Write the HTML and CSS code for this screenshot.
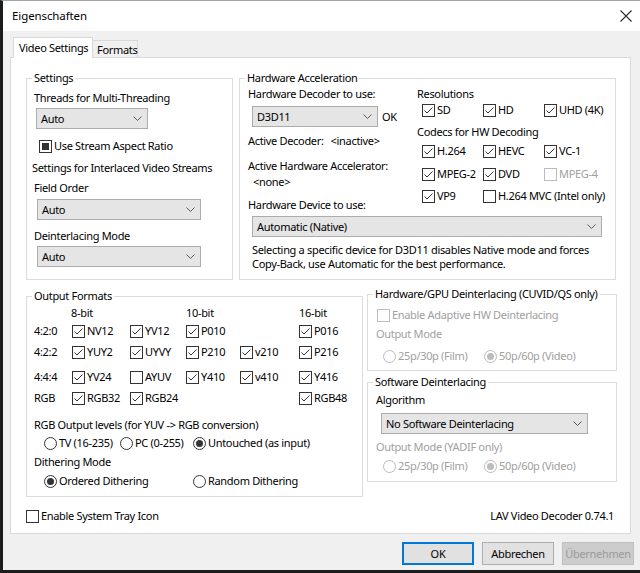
FILE: index.html
```html
<!DOCTYPE html>
<html>
<head>
<meta charset="utf-8">
<title>Eigenschaften</title>
<link rel="stylesheet" href="styles.css">
</head>
<body>
<div class="window">
  <div class="titlebar">
    <span class="title">Eigenschaften</span>
    <svg class="close" width="12" height="12" viewBox="0 0 12 12"><path d="M0.5 0.5L11.5 11.5M11.5 0.5L0.5 11.5" stroke="#2b2b2b" stroke-width="1.1" fill="none"/></svg>
  </div>
  <div class="dialog">
    <div class="tabs">
      <div class="tab tab-active">Video Settings</div>
      <div class="tab tab-formats">Formats</div>
    </div>
    <div class="page">
      <div class="row1">
        <fieldset class="group g-settings">
          <legend>Settings</legend>
          <div class="lbl l-threads">Threads for Multi-Threading</div>
          <div class="select s-threads"><span>Auto</span><svg class="chev" width="9" height="5" viewBox="0 0 9 5"><path d="M0.5 0.5L4.5 4.5L8.5 0.5" stroke="#5a5a5a" fill="none"/></svg></div>
          <div class="cb cb-aspect"><span class="box"><span class="indet"></span></span><span class="cbt">Use Stream Aspect Ratio</span></div>
          <div class="lbl l-interlaced">Settings for Interlaced Video Streams</div>
          <div class="lbl l-field">Field Order</div>
          <div class="select s-field"><span>Auto</span><svg class="chev" width="9" height="5" viewBox="0 0 9 5"><path d="M0.5 0.5L4.5 4.5L8.5 0.5" stroke="#5a5a5a" fill="none"/></svg></div>
          <div class="lbl l-deint">Deinterlacing Mode</div>
          <div class="select s-deint"><span>Auto</span><svg class="chev" width="9" height="5" viewBox="0 0 9 5"><path d="M0.5 0.5L4.5 4.5L8.5 0.5" stroke="#5a5a5a" fill="none"/></svg></div>
        </fieldset>
        <fieldset class="group g-hw">
          <legend>Hardware Acceleration</legend>
          <div class="hw-top">
            <div class="hw-left">
              <div class="lbl">Hardware Decoder to use:</div>
              <div class="decoder-row">
                <div class="select s-decoder"><span>D3D11</span><svg class="chev" width="9" height="5" viewBox="0 0 9 5"><path d="M0.5 0.5L4.5 4.5L8.5 0.5" stroke="#5a5a5a" fill="none"/></svg></div>
                <span class="ok">OK</span>
              </div>
              <div class="lbl l-active">Active Decoder:<span class="inactive">&lt;inactive&gt;</span></div>
              <div class="lbl l-accel">Active Hardware Accelerator:</div>
              <div class="lbl l-none">&lt;none&gt;</div>
              <div class="lbl l-device">Hardware Device to use:</div>
            </div>
            <div class="hw-right">
              <div class="lbl">Resolutions</div>
              <div class="cbgrid">
                <div class="cb"><span class="box"><svg class="tick" width="11" height="11" viewBox="0 0 11 11"><path d="M1.5 5.5L4 8L9.5 2.5" stroke="#333" fill="none"/></svg></span><span class="cbt">SD</span></div>
                <div class="cb"><span class="box"><svg class="tick" width="11" height="11" viewBox="0 0 11 11"><path d="M1.5 5.5L4 8L9.5 2.5" stroke="#333" fill="none"/></svg></span><span class="cbt">HD</span></div>
                <div class="cb"><span class="box"><svg class="tick" width="11" height="11" viewBox="0 0 11 11"><path d="M1.5 5.5L4 8L9.5 2.5" stroke="#333" fill="none"/></svg></span><span class="cbt">UHD (4K)</span></div>
              </div>
              <div class="lbl l-codecs">Codecs for HW Decoding</div>
              <div class="cbgrid c-r1">
                <div class="cb"><span class="box"><svg class="tick" width="11" height="11" viewBox="0 0 11 11"><path d="M1.5 5.5L4 8L9.5 2.5" stroke="#333" fill="none"/></svg></span><span class="cbt">H.264</span></div>
                <div class="cb"><span class="box"><svg class="tick" width="11" height="11" viewBox="0 0 11 11"><path d="M1.5 5.5L4 8L9.5 2.5" stroke="#333" fill="none"/></svg></span><span class="cbt">HEVC</span></div>
                <div class="cb"><span class="box"><svg class="tick" width="11" height="11" viewBox="0 0 11 11"><path d="M1.5 5.5L4 8L9.5 2.5" stroke="#333" fill="none"/></svg></span><span class="cbt">VC-1</span></div>
              </div>
              <div class="cbgrid c-r2">
                <div class="cb"><span class="box"><svg class="tick" width="11" height="11" viewBox="0 0 11 11"><path d="M1.5 5.5L4 8L9.5 2.5" stroke="#333" fill="none"/></svg></span><span class="cbt">MPEG-2</span></div>
                <div class="cb"><span class="box"><svg class="tick" width="11" height="11" viewBox="0 0 11 11"><path d="M1.5 5.5L4 8L9.5 2.5" stroke="#333" fill="none"/></svg></span><span class="cbt">DVD</span></div>
                <div class="cb disabled"><span class="box"></span><span class="cbt">MPEG-4</span></div>
              </div>
              <div class="cbgrid c-r3">
                <div class="cb"><span class="box"><svg class="tick" width="11" height="11" viewBox="0 0 11 11"><path d="M1.5 5.5L4 8L9.5 2.5" stroke="#333" fill="none"/></svg></span><span class="cbt">VP9</span></div>
                <div class="cb span2"><span class="box"></span><span class="cbt">H.264 MVC (Intel only)</span></div>
              </div>
            </div>
          </div>
          <div class="select s-device"><span>Automatic (Native)</span><svg class="chev" width="9" height="5" viewBox="0 0 9 5"><path d="M0.5 0.5L4.5 4.5L8.5 0.5" stroke="#5a5a5a" fill="none"/></svg></div>
          <div class="note">Selecting a specific device for D3D11 disables Native mode and forces<br>Copy-Back, use Automatic for the best performance.</div>
        </fieldset>
      </div>

      <div class="row2">
        <fieldset class="group g-formats">
          <legend>Output Formats</legend>
          <div class="fmt fmt-head"><span></span><span>8-bit</span><span></span><span>10-bit</span><span></span><span>16-bit</span></div>
          <div class="fmt fmt-r1">
            <span>4:2:0</span>
            <div class="cb"><span class="box"><svg class="tick" width="11" height="11" viewBox="0 0 11 11"><path d="M1.5 5.5L4 8L9.5 2.5" stroke="#333" fill="none"/></svg></span><span class="cbt">NV12</span></div>
            <div class="cb"><span class="box"><svg class="tick" width="11" height="11" viewBox="0 0 11 11"><path d="M1.5 5.5L4 8L9.5 2.5" stroke="#333" fill="none"/></svg></span><span class="cbt">YV12</span></div>
            <div class="cb"><span class="box"><svg class="tick" width="11" height="11" viewBox="0 0 11 11"><path d="M1.5 5.5L4 8L9.5 2.5" stroke="#333" fill="none"/></svg></span><span class="cbt">P010</span></div>
            <span></span>
            <div class="cb"><span class="box"><svg class="tick" width="11" height="11" viewBox="0 0 11 11"><path d="M1.5 5.5L4 8L9.5 2.5" stroke="#333" fill="none"/></svg></span><span class="cbt">P016</span></div>
          </div>
          <div class="fmt fmt-r2">
            <span>4:2:2</span>
            <div class="cb"><span class="box"><svg class="tick" width="11" height="11" viewBox="0 0 11 11"><path d="M1.5 5.5L4 8L9.5 2.5" stroke="#333" fill="none"/></svg></span><span class="cbt">YUY2</span></div>
            <div class="cb"><span class="box"><svg class="tick" width="11" height="11" viewBox="0 0 11 11"><path d="M1.5 5.5L4 8L9.5 2.5" stroke="#333" fill="none"/></svg></span><span class="cbt">UYVY</span></div>
            <div class="cb"><span class="box"><svg class="tick" width="11" height="11" viewBox="0 0 11 11"><path d="M1.5 5.5L4 8L9.5 2.5" stroke="#333" fill="none"/></svg></span><span class="cbt">P210</span></div>
            <div class="cb"><span class="box"><svg class="tick" width="11" height="11" viewBox="0 0 11 11"><path d="M1.5 5.5L4 8L9.5 2.5" stroke="#333" fill="none"/></svg></span><span class="cbt">v210</span></div>
            <div class="cb"><span class="box"><svg class="tick" width="11" height="11" viewBox="0 0 11 11"><path d="M1.5 5.5L4 8L9.5 2.5" stroke="#333" fill="none"/></svg></span><span class="cbt">P216</span></div>
          </div>
          <div class="fmt fmt-r3">
            <span>4:4:4</span>
            <div class="cb"><span class="box"><svg class="tick" width="11" height="11" viewBox="0 0 11 11"><path d="M1.5 5.5L4 8L9.5 2.5" stroke="#333" fill="none"/></svg></span><span class="cbt">YV24</span></div>
            <div class="cb"><span class="box"></span><span class="cbt">AYUV</span></div>
            <div class="cb"><span class="box"><svg class="tick" width="11" height="11" viewBox="0 0 11 11"><path d="M1.5 5.5L4 8L9.5 2.5" stroke="#333" fill="none"/></svg></span><span class="cbt">Y410</span></div>
            <div class="cb"><span class="box"><svg class="tick" width="11" height="11" viewBox="0 0 11 11"><path d="M1.5 5.5L4 8L9.5 2.5" stroke="#333" fill="none"/></svg></span><span class="cbt">v410</span></div>
            <div class="cb"><span class="box"><svg class="tick" width="11" height="11" viewBox="0 0 11 11"><path d="M1.5 5.5L4 8L9.5 2.5" stroke="#333" fill="none"/></svg></span><span class="cbt">Y416</span></div>
          </div>
          <div class="fmt fmt-r4">
            <span>RGB</span>
            <div class="cb"><span class="box"><svg class="tick" width="11" height="11" viewBox="0 0 11 11"><path d="M1.5 5.5L4 8L9.5 2.5" stroke="#333" fill="none"/></svg></span><span class="cbt">RGB32</span></div>
            <div class="cb"><span class="box"><svg class="tick" width="11" height="11" viewBox="0 0 11 11"><path d="M1.5 5.5L4 8L9.5 2.5" stroke="#333" fill="none"/></svg></span><span class="cbt">RGB24</span></div>
            <span></span>
            <span></span>
            <div class="cb"><span class="box"><svg class="tick" width="11" height="11" viewBox="0 0 11 11"><path d="M1.5 5.5L4 8L9.5 2.5" stroke="#333" fill="none"/></svg></span><span class="cbt">RGB48</span></div>
          </div>
          <div class="lbl l-rgb">RGB Output levels (for YUV -&gt; RGB conversion)</div>
          <div class="radios r-levels">
            <div class="rb"><span class="radio"></span><span class="cbt">TV (16-235)</span></div>
            <div class="rb"><span class="radio"></span><span class="cbt">PC (0-255)</span></div>
            <div class="rb"><span class="radio on"></span><span class="cbt">Untouched (as input)</span></div>
          </div>
          <div class="lbl l-dither">Dithering Mode</div>
          <div class="radios r-dither">
            <div class="rb"><span class="radio on"></span><span class="cbt">Ordered Dithering</span></div>
            <div class="rb"><span class="radio"></span><span class="cbt">Random Dithering</span></div>
          </div>
        </fieldset>

        <div class="rightcol">
          <fieldset class="group g-gpu">
            <legend>Hardware/GPU Deinterlacing (CUVID/QS only)</legend>
            <div class="cb disabled cb-adaptive"><span class="box"></span><span class="cbt">Enable Adaptive HW Deinterlacing</span></div>
            <div class="lbl dim l-om">Output Mode</div>
            <div class="radios r-mode disabled">
              <div class="rb"><span class="radio"></span><span class="cbt">25p/30p (Film)</span></div>
              <div class="rb"><span class="radio on"></span><span class="cbt">50p/60p (Video)</span></div>
            </div>
          </fieldset>
          <fieldset class="group g-sw">
            <legend>Software Deinterlacing</legend>
            <div class="lbl l-algo">Algorithm</div>
            <div class="select s-algo"><span>No Software Deinterlacing</span><svg class="chev" width="9" height="5" viewBox="0 0 9 5"><path d="M0.5 0.5L4.5 4.5L8.5 0.5" stroke="#5a5a5a" fill="none"/></svg></div>
            <div class="lbl dim l-om2">Output Mode (YADIF only)</div>
            <div class="radios r-mode2 disabled">
              <div class="rb"><span class="radio"></span><span class="cbt">25p/30p (Film)</span></div>
              <div class="rb"><span class="radio on"></span><span class="cbt">50p/60p (Video)</span></div>
            </div>
          </fieldset>
        </div>
      </div>

      <div class="footer-row">
        <div class="cb"><span class="box"></span><span class="cbt">Enable System Tray Icon</span></div>
        <span class="version">LAV Video Decoder 0.74.1</span>
      </div>
    </div>
    <div class="buttons">
      <div class="btn btn-default">OK</div>
      <div class="btn">Abbrechen</div>
      <div class="btn btn-disabled">Übernehmen</div>
    </div>
  </div>
</div>
</body>
</html>
```

FILE: styles.css
```css
* { box-sizing: border-box; }
html, body { margin: 0; padding: 0; }
body {
  font-family: "Noto Sans", "Open Sans", sans-serif;
  font-size: 11px;
  letter-spacing: -0.32px;
  line-height: 16px;
  color: #000;
  background: #ffffff;
}

.window {
  width: 640px;
  height: 573px;
  border-left: 3px solid #1c1c1c;
  border-top: 1px solid #a5a5a5;
  border-bottom: 3px solid #1c1c1c;
  background: #f0f0f0;
  display: flex;
  flex-direction: column;
  overflow: hidden;
}

.titlebar {
  height: 30px;
  background: #ffffff;
  display: flex;
  align-items: flex-start;
  justify-content: space-between;
  padding: 7px 8px 0 9px;
  flex: none;
}
.title { font-size: 11.5px; line-height: 16px; letter-spacing: -0.1px; }
.close { margin-top: 2px; }

.dialog { flex: 1; display: flex; flex-direction: column; }

.tabs {
  display: flex;
  align-items: flex-end;
  height: 20px;
  margin-top: 6px;
  padding-left: 10px;
}
.tab {
  border: 1px solid #d9d9d9;
  border-bottom: none;
  background: #f0f0f0;
  line-height: 15px;
  white-space: nowrap;
}
.tab-active {
  height: 21px;
  margin-bottom: -1px;
  background: #ffffff;
  padding: 2px 0 0 5px;
  position: relative;
  z-index: 1;
  width: 80px;
}
.tab-formats {
  height: 17px;
  border-left: none;
  padding: 1px 0 0 4px;
  width: 45px;
}

.page {
  margin-left: 7px;
  width: 621px;
  height: 477px;
  border: 1px solid #d9d9d9;
  background: #ffffff;
  padding: 12px 0 0 15px;
  display: flex;
  flex-direction: column;
}

.group {
  margin: 0;
  padding: 0;
  border: 1px solid #dcdcdc;
  min-width: 0;
}
.group legend {
  margin-left: 5px;
  padding: 0 2px;
  line-height: 16px;
  white-space: nowrap;
}

.lbl { white-space: nowrap; }
.dim { color: #a0a0a0; }

.row1 { display: flex; gap: 6px; height: 210px; }
.g-settings { width: 207px; height: 210px; }
.g-hw { width: 377px; height: 210px; }

.select {
  height: 21px;
  background: #e5e5e5;
  border: 1px solid #acacac;
  display: flex;
  align-items: center;
  justify-content: space-between;
  padding: 0 5px 0 4px;
  white-space: nowrap;
}

.l-threads { margin: 4px 0 0 7px; }
.s-threads { margin: 2px 0 0 9px; width: 112px; }
.cb-aspect { margin: 9px 0 0 12px; }
.l-interlaced { margin: 6px 0 0 5px; }
.l-field { margin: 4px 0 0 7px; }
.s-field { margin: 3px 0 0 10px; width: 164px; }
.l-deint { margin: 8px 0 0 7px; }
.s-deint { margin: 2px 0 0 10px; width: 164px; }

/* checkbox */
.cb { display: flex; align-items: center; height: 16px; white-space: nowrap; }
.box {
  width: 13px;
  height: 13px;
  border: 1px solid #333333;
  background: #ffffff;
  display: flex;
  align-items: center;
  justify-content: center;
  flex: none;
}
.indet { width: 7px; height: 7px; background: #333333; }
.cbt { margin-left: 2px; }
.cb.disabled .box { border-color: #bcbcbc; }
.cb.disabled { color: #a0a0a0; }

/* radio */
.rb { display: flex; align-items: center; height: 16px; white-space: nowrap; }
.radio {
  width: 13px;
  height: 13px;
  border: 1px solid #333333;
  border-radius: 50%;
  background: #ffffff;
  display: flex;
  align-items: center;
  justify-content: center;
  flex: none;
}
.radio.on::after {
  content: "";
  width: 7px;
  height: 7px;
  border-radius: 50%;
  background: #333333;
}
.radios.disabled { color: #a0a0a0; }
.radios.disabled .radio { border-color: #bcbcbc; }
.radios.disabled .radio.on::after { background: #bcbcbc; }

/* hardware acceleration */
.hw-top { display: flex; height: 127px; }
.hw-left { width: 177px; padding-left: 8px; flex: none; }
.decoder-row { display: flex; align-items: center; margin: 4px 0 0 4px; }
.s-decoder { width: 126px; }
.ok { margin-left: 4px; }
.l-active { margin-top: 6px; }
.inactive { margin-left: 7px; }
.l-accel { margin-top: 9px; }
.l-none { margin-left: 5px; }
.l-device { margin-top: 7px; }

.hw-right { flex: 1; }
.cbgrid { display: grid; grid-template-columns: 61px 61px auto; padding-left: 5px; }
.l-codecs { margin-top: 6px; }
.c-r1 { margin-top: 3px; }
.c-r2 { margin-top: 7px; }
.c-r3 { margin-top: 6px; }
.span2 { grid-column: 2 / 4; }

.s-device { margin: 3px 0 0 12px; width: 350px; }
.note { margin: 6px 0 0 12px; line-height: 14px; white-space: nowrap; }

/* row 2 */
.row2 { display: flex; align-items: flex-start; margin-top: 6px; }
.g-formats { width: 337px; height: 209px; margin-top: 2px; }
.rightcol { width: 250px; margin-left: 4px; display: flex; flex-direction: column; }
.g-gpu { height: 85px; }
.g-sw { height: 108px; margin-top: 3px; }

.fmt {
  display: grid;
  grid-template-columns: 38px 58px 56px 54px 59px auto;
  padding-left: 7px;
  height: 16px;
  align-items: center;
  white-space: nowrap;
}
.fmt-head { margin-top: 1px; }
.fmt-head span:nth-child(2) { margin-left: -1px; }
.fmt-r1 { margin-top: 2px; }
.fmt-r2 { margin-top: 5px; }
.fmt-r3 { margin-top: 9px; }
.fmt-r4 { margin-top: 5px; }

.l-rgb { margin: 11px 0 0 7px; }
.radios { display: grid; }
.r-levels { grid-template-columns: 76px 73px auto; margin: 2px 0 0 17px; }
.l-dither { margin: 3px 0 0 7px; }
.r-dither { grid-template-columns: 149px auto; margin: 3px 0 0 17px; }

.cb-adaptive { margin: 5px 0 0 9px; }
.l-om { margin: 3px 0 0 8px; }
.r-mode { grid-template-columns: 101px auto; margin: 6px 0 0 15px; }
.l-algo { margin: 2px 0 0 8px; }
.s-algo { margin: 5px 0 0 13px; width: 207px; }
.l-om2 { margin: 5px 0 0 8px; }
.r-mode2 { grid-template-columns: 101px auto; margin: 3px 0 0 15px; }

.footer-row {
  display: flex;
  justify-content: space-between;
  align-items: center;
  margin-top: 11px;
  padding-right: 16px;
}

.buttons {
  display: flex;
  justify-content: flex-end;
  gap: 8px;
  margin-top: 8px;
  padding-right: 6px;
}
.btn {
  width: 72px;
  height: 23px;
  background: #e1e1e1;
  border: 1px solid #adadad;
  display: flex;
  align-items: center;
  justify-content: center;
}
.btn-default { border: 1px solid #0078d7; box-shadow: inset 0 0 0 1px #0078d7; }
.btn-disabled { background: #cccccc; border-color: #bfbfbf; color: #9a9a9a; }
```
